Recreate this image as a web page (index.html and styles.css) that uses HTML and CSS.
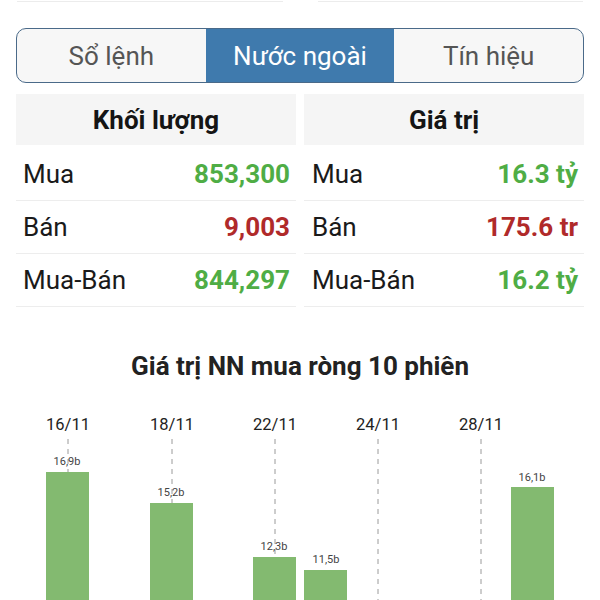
FILE: index.html
```html
<!DOCTYPE html>
<html lang="vi">
<head>
  <meta charset="UTF-8" />
  <meta name="viewport" content="width=device-width, initial-scale=1.0" />
  <title>Nước ngoài</title>
  <link rel="stylesheet" href="styles.css">
</head>
<body>
  <div class="top-strip">
    <div class="top-cell"></div>
    <div class="top-cell"></div>
  </div>

  <div class="tabs">
    <div class="tab">Sổ lệnh</div>
    <div class="tab active">Nước ngoài</div>
    <div class="tab">Tín hiệu</div>
  </div>

  <div class="stats">
    <div class="stat-col">
      <div class="stat-head">Khối lượng</div>
      <div class="stat-row"><span>Mua</span><span class="num up">853,300</span></div>
      <div class="stat-row"><span>Bán</span><span class="num down">9,003</span></div>
      <div class="stat-row"><span>Mua-Bán</span><span class="num up">844,297</span></div>
    </div>
    <div class="stat-col">
      <div class="stat-head">Giá trị</div>
      <div class="stat-row"><span>Mua</span><span class="num up">16.3 tỷ</span></div>
      <div class="stat-row"><span>Bán</span><span class="num down">175.6 tr</span></div>
      <div class="stat-row"><span>Mua-Bán</span><span class="num up">16.2 tỷ</span></div>
    </div>
  </div>

  <h2 class="chart-title">Giá trị NN mua ròng 10 phiên</h2>

  <svg class="chart" width="600" height="220" viewBox="0 0 600 220">
    <g class="grid">
      <line x1="68" y1="40" x2="68" y2="220" />
      <line x1="172" y1="40" x2="172" y2="220" />
      <line x1="275" y1="40" x2="275" y2="220" />
      <line x1="378" y1="40" x2="378" y2="220" />
      <line x1="481" y1="40" x2="481" y2="220" />
    </g>
    <g class="dates">
      <text x="68" y="31">16/11</text>
      <text x="172" y="31">18/11</text>
      <text x="275" y="31">22/11</text>
      <text x="378" y="31">24/11</text>
      <text x="481" y="31">28/11</text>
    </g>
    <g class="bars">
      <rect x="46" y="73" width="43" height="147" />
      <rect x="150" y="104" width="43" height="116" />
      <rect x="253" y="158" width="43" height="62" />
      <rect x="304" y="171" width="43" height="49" />
      <rect x="511" y="88" width="43" height="132" />
    </g>
    <g class="values">
      <text x="67" y="66">16,9b</text>
      <text x="171" y="97">15,2b</text>
      <text x="274" y="151">12,3b</text>
      <text x="326" y="164">11,5b</text>
      <text x="532" y="82">16,1b</text>
    </g>
  </svg>
</body>
</html>
```

FILE: styles.css
```css
body, html {
  margin: 0;
  padding: 0;
  background: #fff;
  font-family: Roboto, "Noto Sans", sans-serif;
  color: #1a1a1a;
}
.top-strip {
  display: flex;
  gap: 35px;
  padding: 0 17px;
}
.top-cell {
  flex: 1;
  height: 1px;
  border-bottom: 1px solid #ececec;
}
.tabs {
  display: flex;
  margin: 26px 16px 0;
  height: 53px;
  border: 1.5px solid #4a6a89;
  border-radius: 10px;
  overflow: hidden;
  background: #f7f7f7;
}
.tab {
  flex: 1;
  display: flex;
  align-items: center;
  justify-content: center;
  font-size: 26px;
  color: #555;
}
.tab.active {
  background: #3f7aad;
  color: #fff;
}
.stats {
  display: grid;
  grid-template-columns: 1fr 1fr;
  gap: 8px;
  margin: 11px 16px 0;
}
.stat-head {
  height: 51px;
  margin-bottom: 3px;
  display: flex;
  align-items: center;
  justify-content: center;
  background: #f5f5f5;
  font-size: 26px;
  font-weight: bold;
  color: #151515;
}
.stat-row {
  height: 52px;
  display: flex;
  align-items: center;
  justify-content: space-between;
  padding: 0 6px 0 7px;
  border-bottom: 1px solid #ededed;
  font-size: 26px;
}
.stat-col + .stat-col .stat-row {
  padding-left: 8px;
}
.num {
  font-weight: bold;
}
.up {
  color: #4fad45;
}
.down {
  color: #b02a2a;
}
.chart-title {
  margin: 44px 0 0;
  line-height: 30px;
  text-align: center;
  font-size: 26px;
  font-weight: bold;
  color: #222;
}
.chart {
  display: block;
  margin-top: 18px;
}
.grid line {
  stroke: #9a9a9a;
  stroke-width: 1;
  stroke-dasharray: 5 5;
}
.dates text {
  font-family: Roboto, sans-serif;
  font-size: 16.5px;
  fill: #222;
  text-anchor: middle;
}
.bars rect {
  fill: #83ba70;
}
.values text {
  font-family: Roboto, sans-serif;
  font-size: 11px;
  fill: #444;
  text-anchor: middle;
}
```
